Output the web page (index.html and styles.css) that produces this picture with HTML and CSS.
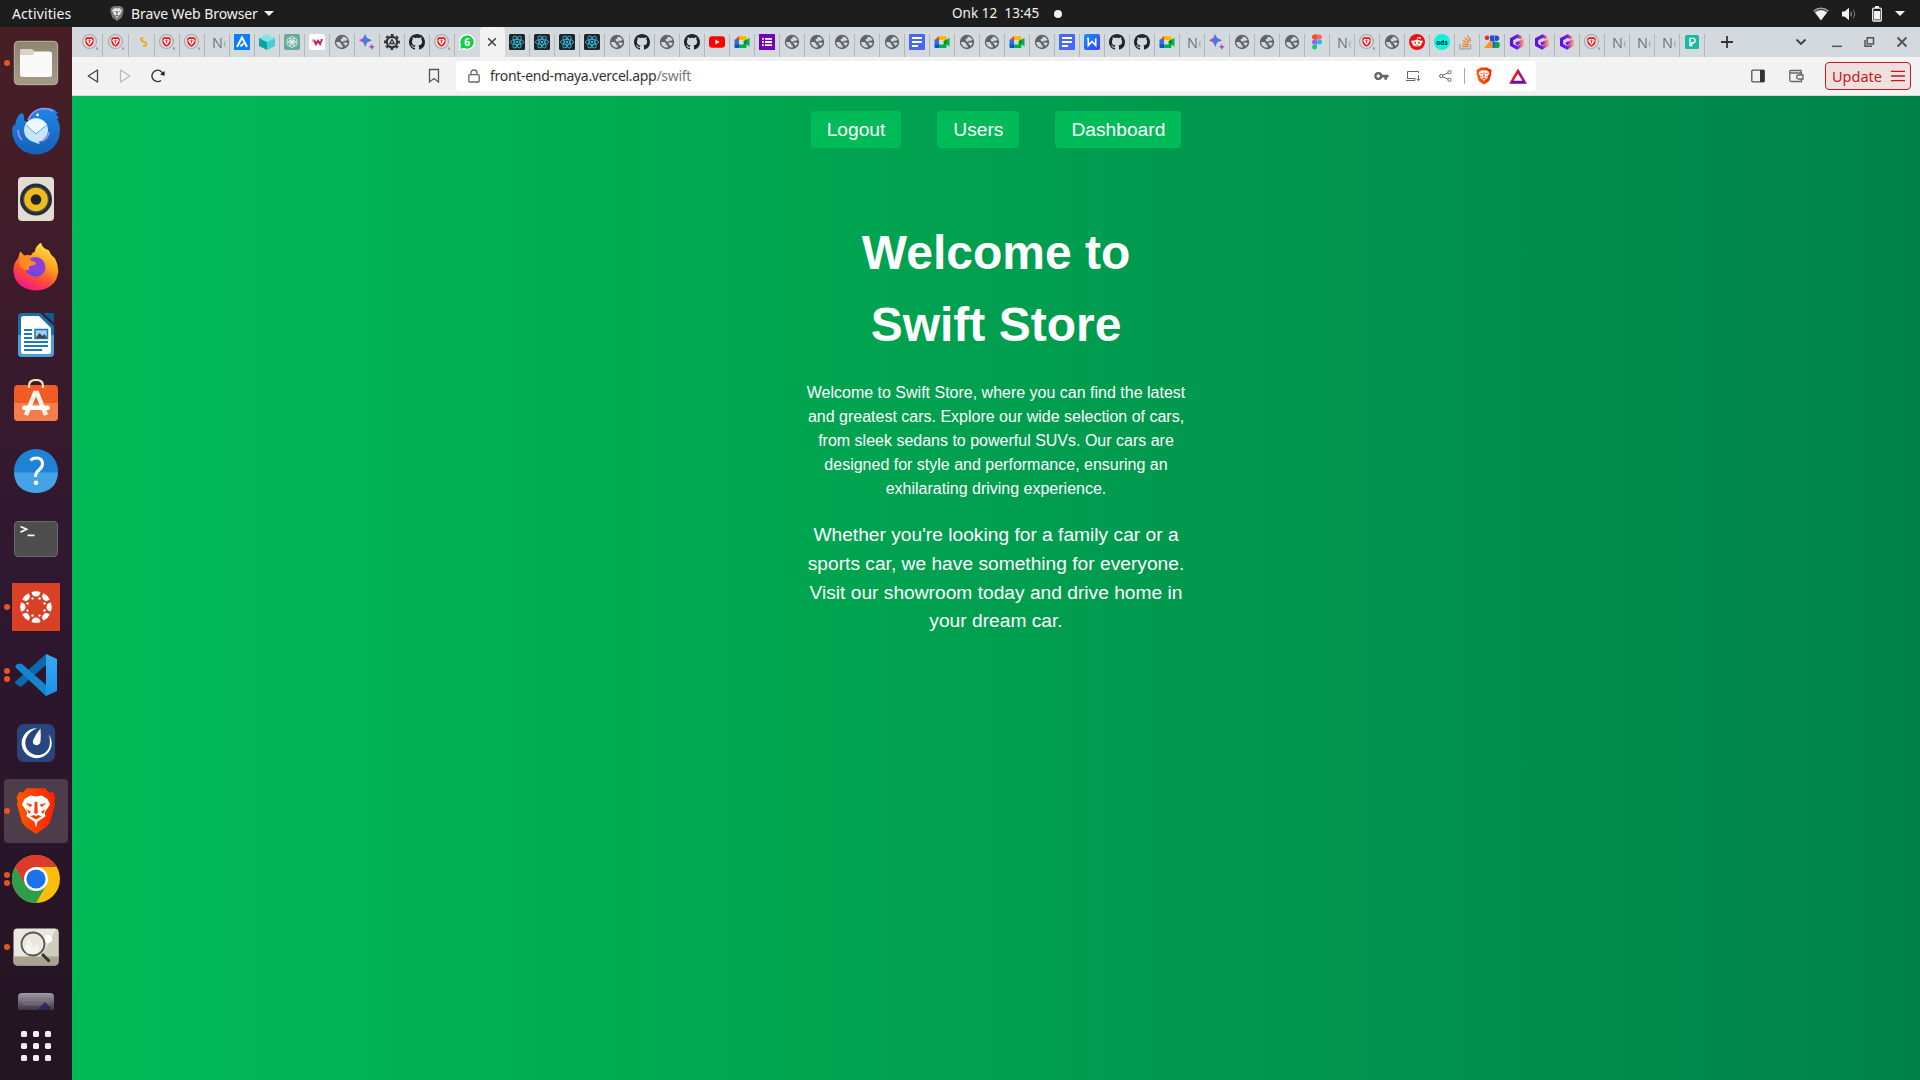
FILE: index.html
```html
<!DOCTYPE html>
<html lang="en">
<head>
<meta charset="utf-8">
<title>Swift Store</title>
<link rel="stylesheet" href="styles.css">
</head>
<body>
<svg class="defs" width="0" height="0" aria-hidden="true">
  <defs>
    <linearGradient id="gSpark" x1="0" y1="0" x2="1" y2="0"><stop offset="0" stop-color="#e0407a"/><stop offset=".25" stop-color="#8d5be0"/><stop offset=".5" stop-color="#2b8ae0"/><stop offset=".7" stop-color="#7a5be0"/><stop offset="1" stop-color="#e8407a"/></linearGradient>
    <linearGradient id="gW" x1="0" y1="0" x2="1" y2="1"><stop offset="0" stop-color="#1196f5"/><stop offset="1" stop-color="#3a3cf8"/></linearGradient>
    <linearGradient id="gG" x1="0" y1="0" x2="1" y2="0"><stop offset="0" stop-color="#5a10f0"/><stop offset=".6" stop-color="#7a1be0"/><stop offset="1" stop-color="#ff8a6a"/></linearGradient>
    <linearGradient id="gBrave" x1="0" y1="0" x2="1" y2="0"><stop offset="0" stop-color="#ff5a00"/><stop offset="1" stop-color="#ff2000"/></linearGradient>
    <linearGradient id="gFiles" x1="0" y1="0" x2="0" y2="1"><stop offset="0" stop-color="#8e8672"/><stop offset="1" stop-color="#a29a86"/></linearGradient>
    <linearGradient id="gBird" x1="0" y1="0" x2="0" y2="1"><stop offset="0" stop-color="#1f86e8"/><stop offset="1" stop-color="#1560b8"/></linearGradient>
    <linearGradient id="gFox" x1=".8" y1="0" x2=".3" y2="1"><stop offset="0" stop-color="#fff04a"/><stop offset=".4" stop-color="#ffa01e"/><stop offset=".7" stop-color="#ff4a38"/><stop offset="1" stop-color="#f0148c"/></linearGradient>
    <linearGradient id="gCode" x1="0" y1="0" x2="0" y2="1"><stop offset="0" stop-color="#36aaf5"/><stop offset="1" stop-color="#1e8fe8"/></linearGradient>
    <linearGradient id="gFade" x1="0" y1="0" x2="0" y2="1"><stop offset="0" stop-color="#a09da6"/><stop offset=".4" stop-color="#3a3040"/></linearGradient>
    <symbol id="shield" viewBox="0 0 16 18"><path fill="url(#gBrave)" d="M4.5.5h7l1.600 1.600 1.500-.2 1 2.100-.5 1.400.3 1.200-1.900 6.500-1.200 1.600L8 17.600l-4.300-2.900-1.200-1.600L.6 6.600l.3-1.200L.4 4l1-2.100 1.500.2z"/><path fill="#fff" d="M8 3.600l2.200-.4 2.300 1.300 1 2.100-2.100 2.900.3 1.500L8.600 13 8 15.200 7.400 13l-3.100-2 .3-1.500-2.100-2.900 1-2.100 2.300-1.300z"/><path fill="#ff3c00" d="M3.900 6l2.600.6-.6 1zM12.100 6l-2.600.6.6 1zM7.500 5.500h1l.2 4.100L8 10.200l-.7-.6zM5.800 11l1.400-.5L8 11l.8-.5 1.400.5L8 12.200zM4.500 8.300l1.500 1-.8.8zM11.500 8.300l-1.500 1 .8.8z"/></symbol>
    <symbol id="brave" viewBox="0 0 16 16"><circle cx="7.500" cy="7.500" r="7" fill="#d7dadd" stroke="#a9adb2" stroke-width="1.200"/><path d="M5 3.300h5l1.800 1.500-.4 4.300-1.200 2L7.500 12.800 4.800 11.100l-1.200-2-.4-4.300z" fill="#f21414"/><path fill="#fff" d="M5 5h5l.7 1.500-1.200 2.600L7.500 11.200 5.500 9.100 4.300 6.500z"/><path fill="#f21414" d="M5 6.300l1.800.3v1zM10 6.300l-1.800.3v1zM7.100 5.500h.8v4h-.8z"/><rect x="14" y="13.500" width="2" height="2" fill="#999"/></symbol>
    <symbol id="globe" viewBox="0 0 16 16"><circle cx="8" cy="8" r="7.200" fill="#5f6368"/><path fill="#d3d8db" d="M2.200 8h3.300l2 2.200v1.300h1.300v2.100C5 13.900 2.200 11.300 2.200 8zM6.600 5.300l2-1V2.400l2.600.8c1 .8 2 1.700 2.400 2.800l-1.800.7H9.900L9 8 6.900 6.900zM9.900 8.400h2.300l1.500.6c-.4 1.300-1.200 2.500-2.300 3.200l-.9-1.700-1.200-.8z"/></symbol>
    <symbol id="github" viewBox="0 0 16 16"><path fill="#20252b" d="M8 0C3.580 0 0 3.580 0 8c0 3.540 2.290 6.530 5.470 7.590.4.070.550-.170.550-.380 0-.190-.010-.820-.010-1.490-2.010.370-2.530-.490-2.690-.940-.090-.230-.480-.940-.820-1.130-.280-.150-.680-.520-.010-.530.630-.010 1.080.580 1.230.820.720 1.210 1.870.870 2.330.660.070-.520.280-.870.510-1.070-1.780-.200-3.640-.890-3.640-3.950 0-.870.310-1.590.820-2.150-.080-.200-.360-1.020.080-2.120 0 0 .670-.210 2.200.820.640-.180 1.320-.270 2-.270s1.360.090 2 .270c1.530-1.040 2.200-.820 2.200-.820.440 1.100.160 1.920.080 2.120.510.560.820 1.270.820 2.150 0 3.070-1.870 3.750-3.650 3.950.290.250.540.730.540 1.480 0 1.070-.010 1.930-.010 2.200 0 .210.150.460.550.380A8.010 8.010 0 0 0 16 8c0-4.420-3.580-8-8-8z"/></symbol>
    <symbol id="react" viewBox="0 0 16 16"><rect width="16" height="16" rx="1.500" fill="#20232a"/><g fill="none" stroke="#35b4cf" stroke-width=".9"><ellipse cx="8" cy="8" rx="6.600" ry="2.600"/><ellipse cx="8" cy="8" rx="6.600" ry="2.600" transform="rotate(60 8 8)"/><ellipse cx="8" cy="8" rx="6.600" ry="2.600" transform="rotate(120 8 8)"/></g><circle cx="8" cy="8" r="1.300" fill="#35b4cf"/></symbol>
    <symbol id="meet" viewBox="0 0 16 16"><path fill="#ea4335" d="M.5 6L5 2v4z"/><path fill="#ffba00" d="M5 2h6.500q1 0 1 1v5L9 6H5z"/><path fill="#2270f0" d="M.5 6H5v5H.5z"/><path fill="#1250c8" d="M.5 10.500H5V14H1.500q-1 0-1-1z"/><path fill="#00b04a" d="M5 10.500h4L12.500 6l3-2.300v9L12.500 10v3q0 1-1 1H5z"/><path fill="#008832" d="M9 8l3.500-3v6z"/></symbol>
    <symbol id="docs" viewBox="0 0 16 16"><rect width="16" height="16" rx="1" fill="#4868f5"/><path stroke="#fff" stroke-width="1.800" d="M3 4h10M3 8h10M3 12h6"/></symbol>
    <symbol id="spark" viewBox="0 0 16 16"><path fill="url(#gSpark)" d="M6 0l2.200 4L13 6.300 8.200 8.600 6.300 13 4.200 8.600 0 6.300 4.200 4zM12.800 9.800l1 2.100 2.200.9-2.200 1-1 2.200-1-2.200-2.200-1 2.200-.9z"/></symbol>
    <symbol id="gee" viewBox="0 0 16 16"><path fill="none" stroke="url(#gG)" stroke-width="3.200" d="M12.800 4L8.500 2 2.600 5.300v5.600L8 14l5-3V7.500L7 10"/></symbol>
    <symbol id="figma" viewBox="0 0 16 16"><path fill="#f24e1e" d="M3 3.200Q3 .6 5.500.6H8v5H5.500Q3 5.600 3 3.200"/><path fill="#ff6a5e" d="M8 .6h2.500a2.500 2.500 0 0 1 0 5H8z"/><path fill="#a259ff" d="M8 5.600H5.500a2.500 2.500 0 0 0 0 5H8z"/><circle cx="10.500" cy="8.100" r="2.500" fill="#1abcfe"/><path fill="#0fcf73" d="M8 10.600H5.500a2.500 2.500 0 1 0 2.500 2.600z"/></symbol>
  </defs>
</svg>

<header class="topbar">
  <span class="activities">Activities</span>
  <span class="app-menu">
    <svg width="14" height="17" viewBox="0 0 16 18"><path fill="#77797b" d="M4.500.5h7l3.600 2 .4 4-2 7L8 17.600 2.500 13.500l-2-7 .4-4z"/><path fill="#e8e8e8" d="M8 3.200l2.500-.5 3 2.500-1.800 4.500L8.500 13 8 15.500 7.500 13 4.300 9.700 2.500 5.200l3-2.500z"/><path fill="#555" d="M3.900 6l2.600.6-.6 1zM12.100 6l-2.600.6.6 1zM7.300 6h1.400v3.500H7.300zM5.800 11L8 10.500l2.200.5L8 12z"/></svg>
    <span class="app-name">Brave Web Browser</span>
    <i class="caret"></i>
  </span>
  <span class="clock"><span class="clock-text">Onk 12&nbsp; 13:45</span><i class="notice"></i></span>
  <span class="status">
    <svg width="16" height="14" viewBox="0 0 16 14"><path fill="#aaa" d="M8 .5Q12 .5 15.800 3.500L8 13.300.2 3.500Q4 .5 8 .5"/><path fill="none" stroke="#222" stroke-width=".9" d="M1.500 4.700Q8 0 14.500 4.700"/><path fill="#f2f2f2" d="M8 3.500q3 0 5.600 2.300L8 13.200 2.400 5.800Q5 3.500 8 3.500"/></svg>
    <svg width="16" height="14" viewBox="0 0 16 14"><path fill="#f2f2f2" d="M1 4.500h2.500L8 .7v12.600L3.500 9.500H1z"/><path fill="none" stroke="#aaa" d="M9.700 4.700q1.500 2.300 0 4.600"/><path fill="none" stroke="#777" d="M12 2.700q3.400 4.300 0 8.600"/></svg>
    <svg width="12" height="16" viewBox="0 0 12 16"><path fill="#f2f2f2" d="M4 0h4v2H4zM3 5h6v8.500H3z"/><rect x="1.700" y="2.200" width="8.600" height="12.800" rx="1" fill="none" stroke="#f2f2f2" stroke-width="1.300"/></svg>
    <i class="caret"></i>
  </span>
</header>

<div class="desktop">
  <nav class="dock">
    <div class="cell one"><svg viewBox="0 0 48 48"><rect x="2.300" y="2.300" width="43.400" height="43.400" rx="4" fill="url(#gFiles)" stroke="#bdb5a2"/><rect x="8" y="12.500" width="32" height="25.500" rx="2.500" fill="#faf9f7"/><path fill="#d9d4c6" d="M8 16v-4.500Q8 10 9.500 10H20l3 3-2.500 3z"/></svg></div>
    <div class="cell"><svg viewBox="0 0 48 48"><path fill="url(#gBird)" d="M0 22l2-5 1 2Q4 9 10 5.500q3 3 2 8l4 1Q19 3 31 1q10-1 15 5l-2 1 3 4-2 1q3 4 3 12-1 14-11 20-13 7-26 0Q0 36 0 22"/><path fill="none" stroke="#b08af0" stroke-width="1.700" d="M16 13Q21 2 31 1.500q6 0 10 2.500M6 23q0 6 4 10M29 34q7-1 8-9"/><circle cx="24" cy="23" r="12" fill="#c7e5fb"/><path fill="#eef8ff" d="M13 18q4-6 11-6t11 6L24 27z"/><path fill="none" stroke="#5ba0dc" d="M13.500 17.500L24 27l10.500-9"/><path fill="#c7e5fb" d="M18 31q3 5 10 6l-3-5z"/><circle cx="25.500" cy="8" r="1.400" fill="#fff"/></svg></div>
    <div class="cell"><svg viewBox="0 0 48 48"><rect x="6" y="2" width="36" height="44" rx="4" fill="#e2ddd3"/><circle cx="24" cy="24.500" r="16" fill="#292b34"/><circle cx="24" cy="24.500" r="13" fill="#454957"/><circle cx="24" cy="24.500" r="11.800" fill="#efbb1f"/><circle cx="24" cy="24.500" r="5.300" fill="#222"/></svg></div>
    <div class="cell"><svg viewBox="0 -.5 48 48"><path fill="url(#gFox)" d="M6 16l2-7q2 1 4 4 4-1 7 0 1-3 4-4 0-5 6-9 1 5 6 7l2 1 2 4 4 4q4 7 3 15-2 11-12 15-10 4-20 0Q2 41 1.500 29 1 21 6 16" transform="translate(0 -1)"/><circle cx="23.500" cy="23.500" r="10" fill="#8a3fdd"/><path fill="#5a50e0" d="M15.500 28a10 10 0 0 0 17-1q-4 5-17 1"/><path fill="#ff8b20" d="M8 13q8-1 11 4l5 2q0 3-5 3-3 1-2 4-5 2-9-4z"/></svg></div>
    <div class="cell"><svg viewBox="0 0 48 48"><path fill="#1670aa" d="M6 6q0-4 4-4h18l14 13v27q0 4-4 4H10q-4 0-4-4z"/><path fill="#4aa0d8" d="M6 24h36v18q0 4-4 4H10q-4 0-4-4z"/><path fill="#0e5c92" d="M31 2h9q2 0 2 2v8z"/><path fill="#fff" d="M9 7.500Q9 5 11.500 5H27l12 12v23.500q0 2.500-2.500 2.500h-25Q9 43 9 40.500z"/><path stroke="#2078b8" stroke-width="2" d="M12 19h8M12 23h8M12 27h8M12 31h24M12 35h24M12 39h18"/><rect x="23" y="18.500" width="12.500" height="9" fill="#9ad0f4" stroke="#1e76b4" stroke-width="1.500"/><path fill="#444" d="M23.500 27l4-5 3 3 2-2 2.500 4z"/></svg></div>
    <div class="cell"><svg viewBox="0 3 48 48"><rect x="2" y="9" width="44" height="36" rx="4" fill="#f05c24"/><path fill="#f57d4b" d="M2 27h44v14q0 4-4 4H6q-4 0-4-4z"/><path fill="none" stroke="#fae0b8" stroke-width="2.200" d="M17 12v-2q0-6 7-6t7 6v2"/><path fill="none" stroke="#fff4ec" stroke-width="4.500" d="M14 39l9-22h2l9 22"/><rect x="10" y="29.500" width="28" height="4.500" rx="2.200" fill="#fff"/></svg></div>
    <div class="cell"><svg viewBox="0 0 48 48"><circle cx="24" cy="24" r="22" fill="#1e83d4"/><path fill="#44a3e5" d="M2 25.500h44Q45 45 24 46 3 45 2 25.500"/><path fill="none" stroke="#fff" stroke-width="3" d="M18.500 13.500q2-2.500 6-2.500 6 0 6 6 0 3-3.500 6-3.500 2.500-3.500 7"/><circle cx="24" cy="35.700" r="2.300" fill="#fff"/></svg></div>
    <div class="cell"><svg viewBox="0 0 48 48"><rect x="2.500" y="6.500" width="43" height="35" rx="3.500" fill="#4d4d4d" stroke="#696969"/><path fill="none" stroke="#f5f5f5" stroke-width="1.800" d="M8.500 11.500l6 2.800-6 2.800M15.500 20.300h7"/></svg></div>
    <div class="cell one"><svg viewBox="0 0 48 48"><path fill="#d94026" d="M0 0h48v48H0z"/><g fill="#fff"><g id="arc"><path d="M19.500 9Q24 7.300 28.500 9q-.8 4.500-4.500 4.500T19.500 9"/><circle cx="27.500" cy="15.500" r="1.200"/></g><use href="#arc" transform="rotate(45 24 24)"/><use href="#arc" transform="rotate(90 24 24)"/><use href="#arc" transform="rotate(135 24 24)"/><use href="#arc" transform="rotate(180 24 24)"/><use href="#arc" transform="rotate(225 24 24)"/><use href="#arc" transform="rotate(270 24 24)"/><use href="#arc" transform="rotate(315 24 24)"/></g></svg></div>
    <div class="cell two"><svg viewBox="0 0 48 48"><path fill="#0b69ad" d="M3 32q0-1 1-2L34 3v11L10 35q-2 1-3 0z"/><path fill="#1286d0" d="M7 13q-1-1-3 1-1 2 0 3l30 28V34L10 13q-1-1-3 0"/><path fill="url(#gCode)" d="M34 3l11 5v32l-11 5z"/></svg></div>
    <div class="cell"><svg viewBox="0 0 48 48"><rect x="5" y="5" width="38" height="38" rx="7" fill="#29457e"/><path fill="#fff" d="M25 9.200A15 15 0 1 0 36.500 15q1.500 3 1.300 7.500A12.300 12.300 0 1 1 15 17.500Q18 12 25 9.200"/><path fill="#fff" d="M28.500 9.500q.5 8 0 13-1 4-4.500 3.700-4.200-1-2.800-5.200 2-5.500 7.300-11.500"/></svg></div>
    <div class="cell one current"><svg viewBox="0 0 48 48"><svg x="3.500" y="0" width="41" height="48" viewBox="0 0 16 18" preserveAspectRatio="none"><use href="#shield" width="16" height="18"/></svg></svg></div>
    <div class="cell two"><svg viewBox="0 0 48 48"><circle cx="24" cy="24" r="24" fill="#fbbc0a"/><path fill="#dd3a2e" d="M3.200 12A24 24 0 0 1 44.800 12H24L13 30z"/><path fill="#2f9d4a" d="M3.200 12A24 24 0 0 0 24 48L34.500 30 13.500 30z"/><circle cx="24" cy="24" r="12" fill="#fff"/><circle cx="24" cy="24" r="9.600" fill="#1a73e8"/></svg></div>
    <div class="cell one"><svg viewBox="0 0 48 48"><rect x="1.500" y="5.500" width="45" height="37" rx="4" fill="#e9e7df"/><path fill="#d0cdbd" d="M29 34L44 6q2.500 0 2.500 4v24z"/><path fill="#a9a28d" d="M1.500 33.500h45v5q0 4-4 4h-37q-4 0-4-4z"/><circle cx="36" cy="16" r="4" fill="#fff"/><circle cx="21" cy="21" r="11.500" fill="#e6e6e0" fill-opacity=".85" stroke="#555" stroke-width="1.800"/><path fill="#fff" fill-opacity=".5" d="M12 26l5-10 5 10 2-6 4 7-6 4h-7z"/><path stroke="#333" stroke-width="3" d="M30 31l7.500 7.500"/></svg></div>
    <div class="cell cut"><svg viewBox="0 0 48 48"><rect x="6" y="2" width="36" height="44" rx="4" fill="url(#gFade)"/><path stroke="#8d8a94" stroke-width=".6" d="M10 10h28M10 13h28"/><path fill="#2c2860" d="M24 20l9-9 6 6-8 8z"/></svg></div>
    <div class="apps"><i></i><i></i><i></i><i></i><i></i><i></i><i></i><i></i><i></i></div>
  </nav>

  <main class="window">
    <div class="tabs">
      <span class="tab first"><svg><use href="#brave"/></svg></span>
      <span class="tab wide"><svg><use href="#brave"/></svg></span>
      <span class="tab wide"><svg viewBox="0 0 16 16"><path fill="none" stroke="#f9a825" stroke-width="2" d="M9.500 4.200H7.600q-1.600 1.600.2 2.800l3.400 1.200q2.200 1.600.5 3.600H9"/><path fill="#e8d5b8" d="M0 4h2v2H0z"/></svg></span>
      <span class="tab"><svg><use href="#brave"/></svg></span>
      <span class="tab"><svg><use href="#brave"/></svg></span>
      <span class="tab text">Ne</span>
      <span class="tab"><svg viewBox="0 0 16 16"><path fill="#0a7cff" d="M0 0h16v16H0z"/><path fill="none" stroke="#fff" stroke-width="2" d="M3 13L8 3.500 13 13M6.500 12.200l3-2.700"/></svg></span>
      <span class="tab"><svg viewBox="0 0 16 16"><path fill="#7fe6e6" d="M8 0l8 4-8 4-8-4z"/><path fill="#0fa3a8" d="M0 4l8 4v8l-8-4z"/><path fill="#4bccd6" d="M16 4L8 8v8l8-4z"/></svg></span>
      <span class="tab"><svg viewBox="0 0 16 16"><rect width="16" height="16" rx="2" fill="#66ab97"/><g fill="none" stroke="#e6f3ef" stroke-width=".8"><ellipse cx="8" cy="5.500" rx="2.400" ry="3"/><ellipse cx="8" cy="5.500" rx="2.400" ry="3" transform="rotate(60 8 8)"/><ellipse cx="8" cy="5.500" rx="2.400" ry="3" transform="rotate(120 8 8)"/><ellipse cx="8" cy="5.500" rx="2.400" ry="3" transform="rotate(180 8 8)"/><ellipse cx="8" cy="5.500" rx="2.400" ry="3" transform="rotate(240 8 8)"/><ellipse cx="8" cy="5.500" rx="2.400" ry="3" transform="rotate(300 8 8)"/></g></svg></span>
      <span class="tab"><svg viewBox="0 0 16 16"><rect width="16" height="16" rx="2.500" fill="#fff"/><path fill="none" stroke="#d01878" stroke-width="2.100" d="M5 6l2 4 2-3 2 3 1-3"/><circle cx="4" cy="6.500" r="1.300" fill="#f5a623"/><circle cx="12.700" cy="6" r="1.100" fill="#7a1050"/></svg></span>
      <span class="tab"><svg><use href="#globe"/></svg></span>
      <span class="tab"><svg><use href="#spark"/></svg></span>
      <span class="tab"><svg viewBox="0 0 16 16"><circle cx="8" cy="8" r="7" fill="none" stroke="#333639" stroke-width="2" stroke-dasharray="2.900 2.598" stroke-dashoffset="1.450"/><circle cx="8" cy="8" r="5.200" fill="none" stroke="#333639" stroke-width="2.200"/><path fill="none" stroke="#333639" stroke-width="1.300" d="M8 5.500l2.300 4H5.700z"/></svg></span>
      <span class="tab"><svg><use href="#github"/></svg></span>
      <span class="tab"><svg><use href="#brave"/></svg></span>
      <span class="tab plain"><svg viewBox="0 0 16 16"><path fill="#fff" d="M0 16l.6-5A8 8 0 1 1 5 15.300z"/><path fill="#10d04a" d="M1.300 14.700l.6-4A6.700 6.700 0 1 1 5 14z"/><text x="8" y="11.600" text-anchor="middle" class="badge">6</text></svg></span>
      <span class="tab plain open"><svg viewBox="0 0 16 16"><path stroke="#3c4043" stroke-width="1.500" d="M4.200 4.200l7.600 7.600M11.800 4.200l-7.600 7.600"/></svg></span>
      <span class="tab"><svg><use href="#react"/></svg></span>
      <span class="tab"><svg><use href="#react"/></svg></span>
      <span class="tab"><svg><use href="#react"/></svg></span>
      <span class="tab"><svg><use href="#react"/></svg></span>
      <span class="tab"><svg><use href="#globe"/></svg></span>
      <span class="tab"><svg><use href="#github"/></svg></span>
      <span class="tab"><svg><use href="#globe"/></svg></span>
      <span class="tab"><svg><use href="#github"/></svg></span>
      <span class="tab"><svg viewBox="0 0 16 16"><rect y="2.300" width="16" height="11.400" rx="3" fill="#f00"/><path fill="#fff" d="M6.300 5.500L10.600 8l-4.300 2.500z"/></svg></span>
      <span class="tab"><svg><use href="#meet"/></svg></span>
      <span class="tab"><svg viewBox="0 0 16 16"><path fill="#7200b8" d="M0 0h16v16H0z"/><path stroke="#fff" stroke-width="1.800" d="M3 4.900h1.800M6 4.900h7M3 8h1.800M6 8h7M3 11.100h1.800M6 11.100h7"/></svg></span>
      <span class="tab"><svg><use href="#globe"/></svg></span>
      <span class="tab"><svg><use href="#globe"/></svg></span>
      <span class="tab"><svg><use href="#globe"/></svg></span>
      <span class="tab"><svg><use href="#globe"/></svg></span>
      <span class="tab"><svg><use href="#globe"/></svg></span>
      <span class="tab"><svg><use href="#docs"/></svg></span>
      <span class="tab"><svg><use href="#meet"/></svg></span>
      <span class="tab"><svg><use href="#globe"/></svg></span>
      <span class="tab"><svg><use href="#globe"/></svg></span>
      <span class="tab"><svg><use href="#meet"/></svg></span>
      <span class="tab"><svg><use href="#globe"/></svg></span>
      <span class="tab"><svg><use href="#docs"/></svg></span>
      <span class="tab"><svg viewBox="0 0 16 16"><rect width="16" height="16" rx="2" fill="url(#gW)"/><path fill="none" stroke="#fff" stroke-width="1.600" d="M3 4.500h1.300v7l3.700-4 3.700 4v-7"/></svg></span>
      <span class="tab"><svg><use href="#github"/></svg></span>
      <span class="tab"><svg><use href="#github"/></svg></span>
      <span class="tab"><svg><use href="#meet"/></svg></span>
      <span class="tab text">Ne</span>
      <span class="tab"><svg><use href="#spark"/></svg></span>
      <span class="tab"><svg><use href="#globe"/></svg></span>
      <span class="tab"><svg><use href="#globe"/></svg></span>
      <span class="tab"><svg><use href="#globe"/></svg></span>
      <span class="tab"><svg><use href="#figma"/></svg></span>
      <span class="tab text">Ne</span>
      <span class="tab"><svg><use href="#brave"/></svg></span>
      <span class="tab"><svg><use href="#globe"/></svg></span>
      <span class="tab"><svg viewBox="0 0 16 16"><circle cx="8" cy="8" r="8" fill="#f01010"/><ellipse cx="8" cy="9.300" rx="4.600" ry="3.300" fill="#fff"/><circle cx="3.500" cy="7.800" r="1.300" fill="#fff"/><circle cx="12.500" cy="7.800" r="1.300" fill="#fff"/><circle cx="11" cy="4" r="1" fill="#fff"/><path fill="none" stroke="#fff" stroke-width=".8" d="M8 6.500l.7-3 2 .5"/><circle cx="6.200" cy="8.700" r=".9" fill="#f01010"/><circle cx="9.800" cy="8.700" r=".9" fill="#f01010"/><path fill="none" stroke="#f01010" stroke-width=".7" d="M6.200 10.900q1.800 1 3.600 0"/></svg></span>
      <span class="tab"><svg viewBox="0 0 16 16"><circle cx="8" cy="8" r="8" fill="#08f5dc"/><text x="8" y="10.500" text-anchor="middle" class="ods">ods</text></svg></span>
      <span class="tab"><svg viewBox="0 0 16 16"><path fill="none" stroke="#9fa3a6" stroke-width="1.300" d="M1 10v4.800h10.500V10"/><path stroke="#f0802a" stroke-width="1.300" d="M3 12.500h6.500M3.200 9.700l6.300 1.300M4 6.700l5.900 2.800M5.700 3.800l5 4.200M8.400 1.500l3.600 5.300"/></svg></span>
      <span class="tab"><svg viewBox="0 0 16 16"><circle cx="3" cy="3.800" r="2.300" fill="#e8253a"/><path fill="#2050d8" d="M6 1.500h4v5.500H6zM10.500 1.500h2a2.500 2.500 0 0 1 0 5.500h-2z"/><path fill="#ff9a10" d="M0 14L6 7h2v7z"/><circle cx="12.500" cy="11" r="3.300" fill="#0fa050"/><path fill="#2050d8" d="M8.500 7h2v7h-2z"/></svg></span>
      <span class="tab"><svg><use href="#gee"/></svg></span>
      <span class="tab"><svg><use href="#gee"/></svg></span>
      <span class="tab"><svg><use href="#gee"/></svg></span>
      <span class="tab"><svg><use href="#brave"/></svg></span>
      <span class="tab text">Ne</span>
      <span class="tab text">Ne</span>
      <span class="tab text">Ne</span>
      <span class="tab"><svg viewBox="0 0 16 16"><rect x="1" y="1" width="14" height="14" rx="1.500" fill="#1db8a0"/><path fill="none" stroke="#fff" stroke-width="1.300" d="M6 11.700V4.300h3.800l1.200 1.300v2L9.500 9H7.700v2.700z"/></svg></span>
      <svg class="plus" viewBox="0 0 12 12"><path stroke="#333" stroke-width="1.800" d="M6 0v12M0 6h12"/></svg>
      <span class="window-buttons">
        <svg width="12" height="12" viewBox="0 0 12 12"><path fill="none" stroke="#3c4043" stroke-width="1.800" d="M1.500 3.500L6 8l4.500-4.500"/></svg>
        <svg width="12" height="12" viewBox="0 0 12 12"><path stroke="#555" stroke-width="1.500" d="M1 10.300h10"/></svg>
        <svg width="12" height="12" viewBox="0 0 12 12"><path fill="none" stroke="#555" stroke-width="1.500" d="M4.200 1.700h6.300V8H4.200zM2 4v6.300h7"/></svg>
        <svg width="12" height="12" viewBox="0 0 12 12"><path stroke="#555" stroke-width="2" d="M1.500 1.500l9 9M10.500 1.500l-9 9"/></svg>
      </span>
    </div>

    <div class="toolbar">
      <svg class="back" width="12" height="14" viewBox="0 0 12 14"><path fill="none" stroke="#444" stroke-width="1.300" stroke-linejoin="round" d="M10.500 1v12L1.200 7z"/></svg>
      <svg class="forward" width="12" height="14" viewBox="0 0 12 14"><path fill="none" stroke="#bbb" stroke-width="1.300" stroke-linejoin="round" d="M1.500 1v12L10.800 7z"/></svg>
      <svg class="reload" width="14" height="14" viewBox="0 0 14 14"><path fill="none" stroke="#333" stroke-width="1.400" d="M10 11.500A5.700 5.700 0 1 1 12.200 5.500"/><path fill="#222" d="M9 5.500l4.600 1.300V2z"/></svg>
      <svg class="bookmark" width="12" height="16" viewBox="0 0 12 16"><path fill="none" stroke="#555" stroke-width="1.300" d="M1.500 1.500h9V14L6 10.500 1.500 14z"/></svg>
      <div class="address">
        <svg width="12" height="14" viewBox="0 0 12 14"><rect x=".8" y="5.700" width="10.400" height="7.300" rx="1" fill="none" stroke="#666" stroke-width="1.300"/><path fill="none" stroke="#666" stroke-width="1.300" d="M3 5.500V4q0-3 3-3t3 3v1.500"/></svg>
        <span class="url">front-end-maya.vercel.app<span class="path">/swift</span></span>
        <span class="address-icons">
          <svg width="15" height="10" viewBox="0 0 15 10"><circle cx="4.300" cy="5" r="2.900" fill="none" stroke="#666" stroke-width="2.400"/><path fill="#666" d="M7 3.800h7.500v2.600H13V8.800h-2.600V6.400H7z"/></svg>
          <svg width="15" height="12" viewBox="0 0 15 12"><path fill="none" stroke="#666" d="M12.500 3V1.500H1.500v7.200M0 10.500h9M1 8.500h8v2M12.500 5v5.500M10.500 8.700l2 2 2-2"/></svg>
          <svg width="13" height="12" viewBox="0 0 13 12"><g fill="none" stroke="#666"><circle cx="2.200" cy="6" r="1.600"/><circle cx="10.500" cy="2.200" r="1.600"/><circle cx="10.500" cy="9.800" r="1.600"/><path d="M3.700 5.200L9 2.800M3.700 6.800L9 9.200"/></g></svg>
          <i class="rule"></i>
          <svg width="16" height="18"><use href="#shield"/></svg>
          <svg width="18" height="16" viewBox="0 0 18 16"><path fill="#ff1010" d="M9 .5v6L4.500 13 0 15.800z"/><path fill="#a0148c" d="M9 .5l9 15.300-4.500-2.800L9 6.500z"/><path fill="#6410a8" d="M0 15.800L4.500 12.500h9l4.500 3.300z"/><path fill="#fff" d="M9 5.800l4 6.700H5z"/></svg>
        </span>
      </div>
      <span class="toolbar-end">
        <svg width="14" height="14" viewBox="0 0 14 14"><rect x=".8" y="1.200" width="12.400" height="11.600" rx="1" fill="none" stroke="#555" stroke-width="1.300"/><path fill="#333" d="M9 1h4.500v12H9z"/></svg>
        <svg width="15" height="14" viewBox="0 0 15 14"><path fill="none" stroke="#666" stroke-width="1.300" d="M12 4V1.500H1.500q-.7 0-.7 1V11q0 1.500 1.200 1.500h10.500V10M1 4h11.500v2"/><path fill="none" stroke="#666" stroke-width="1.300" d="M14 6H9.500q-1.800 0-1.800 2t1.800 2H14z"/></svg>
        <span class="update"><span class="update-text">Update</span><svg width="14" height="12" viewBox="0 0 14 12"><path stroke="#c01a1a" stroke-width="1.300" d="M0 1.300h14M0 6h14M0 10.700h14"/></svg></span>
      </span>
    </div>

    <section class="page">
      <nav class="links"><a>Logout</a><a>Users</a><a>Dashboard</a></nav>
      <article class="welcome">
        <h1>Welcome to<br>Swift Store</h1>
        <p>Welcome to Swift Store, where you can find the latest and greatest cars. Explore our wide selection of cars, from sleek sedans to powerful SUVs. Our cars are designed for style and performance, ensuring an exhilarating driving experience.</p>
        <p class="large">Whether you're looking for a family car or a sports car, we have something for everyone. Visit our showroom today and drive home in your dream car.</p>
      </article>
    </section>
  </main>
</div>
</body>
</html>
```
FILE: styles.css
```css
* { box-sizing: border-box; }
body { margin: 0; width: 1920px; height: 1080px; overflow: hidden; display: flex; flex-direction: column; font-family: "Noto Sans", sans-serif; }
svg { display: block; flex: none; }
.defs { position: absolute; }

/* system bar */
.topbar { height: 27px; flex: none; background: #1d1d1d; color: #f2f2f2; display: grid; grid-template-columns: auto auto 1fr auto; align-items: center; font-size: 13.500px; line-height: 27px; padding: 0 13px 0 12px; }
.activities { width: 98px; font-size: 14px; letter-spacing: .1px; }
.app-menu { display: flex; align-items: center; }
.app-name { width: 127px; margin-left: 7px; font-size: 14px; letter-spacing: -.08px; white-space: nowrap; }
.caret { border: 5px solid transparent; border-top-color: #f2f2f2; border-bottom: 0; }
.app-menu .caret { margin-left: 6px; }
.clock { display: flex; align-items: center; margin-left: 678px; }
.clock-text { width: 90px; white-space: nowrap; letter-spacing: .05px; }
.notice { width: 8px; height: 8px; border-radius: 50%; background: #f2f2f2; margin-left: 12px; }
.status { display: flex; align-items: center; }
.status svg + svg { margin-left: 12px; }
.status svg:nth-child(3) { margin-left: 14px; }
.status .caret { margin-left: 12px; margin-right: 2px; }

.desktop { flex: 1; display: flex; min-height: 0; }

/* dock */
.dock { width: 72px; flex: none; padding-top: 2px; display: flex; flex-direction: column; background: linear-gradient(#471f25, #3d1b2a 25%, #301830 50%, #2a152a 75%, #221520); }
.cell { position: relative; height: 68px; flex: none; display: flex; align-items: center; justify-content: center; }
.cell > svg { width: 48px; height: 48px; }
.cut { height: 29px; align-items: flex-start; padding-top: 10px; overflow: hidden; }
.current { height: 64px; margin: 2px 4px; border-radius: 4px; background: #4d3d4b; }
.one::before, .two::before, .two::after { content: ""; position: absolute; left: 4px; top: 31px; width: 6px; height: 6px; border-radius: 50%; background: #e95420; }
.current::before { left: 0; top: 29px; }
.two::before { top: 26.600px; }
.two::after { top: 35.400px; }
.apps { flex: 1; display: grid; grid-template-columns: repeat(3, 6px); grid-auto-rows: 6px; gap: 6px; justify-content: center; align-content: start; padding-top: 21px; }
.apps i { background: #f3f0f0; border-radius: 1.500px; }

/* browser window */
.window { flex: 1; display: flex; flex-direction: column; min-width: 0; }
.tabs { height: 30px; flex: none; background: #d3d9dc; display: flex; }
.tab { position: relative; width: 25px; height: 30px; flex: none; display: flex; align-items: center; justify-content: center; padding-right: 1px; }
.tab::after { content: ""; position: absolute; right: 0; top: 7px; bottom: 0; width: 1px; background: #b3b8bb; }
.tab svg { width: 16px; height: 16px; }
.tab.first { width: 31px; padding-left: 5px; }
.tab.wide { width: 26px; }
.tab.plain::after { display: none; }
.tab.open { background: #f2f2f2; border-radius: 4px 4px 0 0; }
.tab.text { justify-content: flex-start; padding: 0 0 0 7px; font-size: 14.500px; color: transparent; background: linear-gradient(90deg, #6d7174 16px, transparent 22px); background-clip: text; }
.badge { font: bold 10px "Noto Sans", sans-serif; fill: #fff; }
.ods { font: bold 6.500px "Noto Sans", sans-serif; fill: #123; }
.plus { width: 12px; height: 12px; margin: 9px 0 0 16px; }
.window-buttons { margin: 9px 12px 0 auto; display: flex; }
.window-buttons svg + svg { margin-left: 24px; }
.window-buttons svg:nth-child(3) { margin-left: 20px; }
.window-buttons svg:nth-child(4) { margin-left: 21px; }

.toolbar { height: 39px; flex: none; background: #f2f2f2; border-bottom: 1px solid #d4dcd6; display: flex; align-items: center; padding: 0 9px 0 15px; }
.forward { margin-left: 20px; }
.reload { margin-left: 20px; }
.bookmark { margin-left: 263px; }
.address { width: 1080px; height: 30px; margin-left: 16px; border-radius: 4px; background: #fff; display: flex; align-items: center; padding: 0 9px 0 12px; }
.url { margin-left: 10px; font-size: 14px; color: #333; letter-spacing: -.3px; line-height: 20px; padding-bottom: 1px; white-space: nowrap; }
.path { color: #777; }
.address-icons { margin-left: auto; display: flex; align-items: center; }
.address-icons svg:nth-child(2) { margin-left: 17px; }
.address-icons svg:nth-child(3) { margin-left: 18px; }
.rule { width: 1px; height: 16px; margin: 0 11px 0 12px; background: #aaa; }
.address-icons svg:last-child { margin-left: 17px; }
.toolbar-end { margin-left: auto; display: flex; align-items: center; }
.toolbar-end > svg + svg { margin-left: 24px; }
.update { width: 86px; height: 28px; margin-left: 21px; border: 1px solid #c01a1a; border-radius: 4px; background: #efdfdf; display: flex; align-items: center; justify-content: space-between; padding: 0 5px 0 6px; color: #c01a1a; font-size: 14.500px; }
.update-text { line-height: 20px; padding-bottom: 1px; }

/* store page */
.page { flex: 1; background: linear-gradient(to right, #00bb58, #00a650 38%, #00984e 62%, #008248); color: #fff; font-family: "Liberation Sans", sans-serif; display: flex; flex-direction: column; align-items: center; padding-top: 15px; }
.links { display: flex; gap: 36px; }
.links a { height: 37px; padding: 0 16px; border-radius: 4px; background: #00bb58; font-size: 19.200px; line-height: 37px; }
.welcome { width: 384px; margin-top: 69px; text-align: center; }
h1 { margin: 0; font-size: 48px; line-height: 72px; }
p { margin: 20px 0 0; font-size: 16px; line-height: 24px; }
.large { font-size: 19.200px; line-height: 28.800px; }
```
